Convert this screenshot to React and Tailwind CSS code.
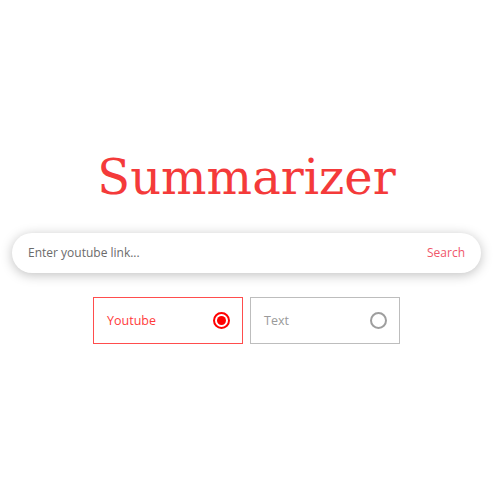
import React, { useState } from 'react';

const Option = ({ label, active, onClick }) => (
  <button
    onClick={onClick}
    className={`w-[150px] h-[47px] flex items-center justify-between pl-[13px] pr-[12px] border text-[12.5px] ${
      active ? 'border-[#ff4d4d] text-[#ff3b3b]' : 'border-[#bdbdbd] text-[#9a9a9a]'
    }`}
  >
    <span className="pt-[2px]">{label}</span>
    {active ? (
      <span className="w-[17px] h-[17px] rounded-full border-2 border-[#ff0000] flex items-center justify-center">
        <span className="w-[9px] h-[9px] rounded-full bg-[#ff0000]" />
      </span>
    ) : (
      <span className="w-[17px] h-[17px] rounded-full border-2 border-[#9e9e9e]" />
    )}
  </button>
);

export default function App() {
  const [mode, setMode] = useState('youtube');

  return (
    <div className="w-[493px] h-[500px] bg-white flex flex-col items-center font-['Open_Sans',sans-serif]">
      <h1 className="mt-[147px] text-[48px] leading-[60px] text-[#f43a3a] font-['DejaVu_Serif',serif]">
        Summarizer
      </h1>

      {/* Search bar */}
      <div className="mt-[26px] w-[469px] h-[40px] rounded-[20px] bg-white shadow-[0_2px_12px_rgba(0,0,0,0.25)] flex items-center justify-between pl-[16px] pr-[16px]">
        <span className="text-[12px] text-[#6b6b6b]">Enter youtube link...</span>
        <span className="text-[12px] text-[#f0566a]">Search</span>
      </div>

      {/* Mode options */}
      <div className="mt-[24px] flex gap-[7px]">
        <Option label="Youtube" active={mode === 'youtube'} onClick={() => setMode('youtube')} />
        <Option label="Text" active={mode === 'text'} onClick={() => setMode('text')} />
      </div>
    </div>
  );
}
